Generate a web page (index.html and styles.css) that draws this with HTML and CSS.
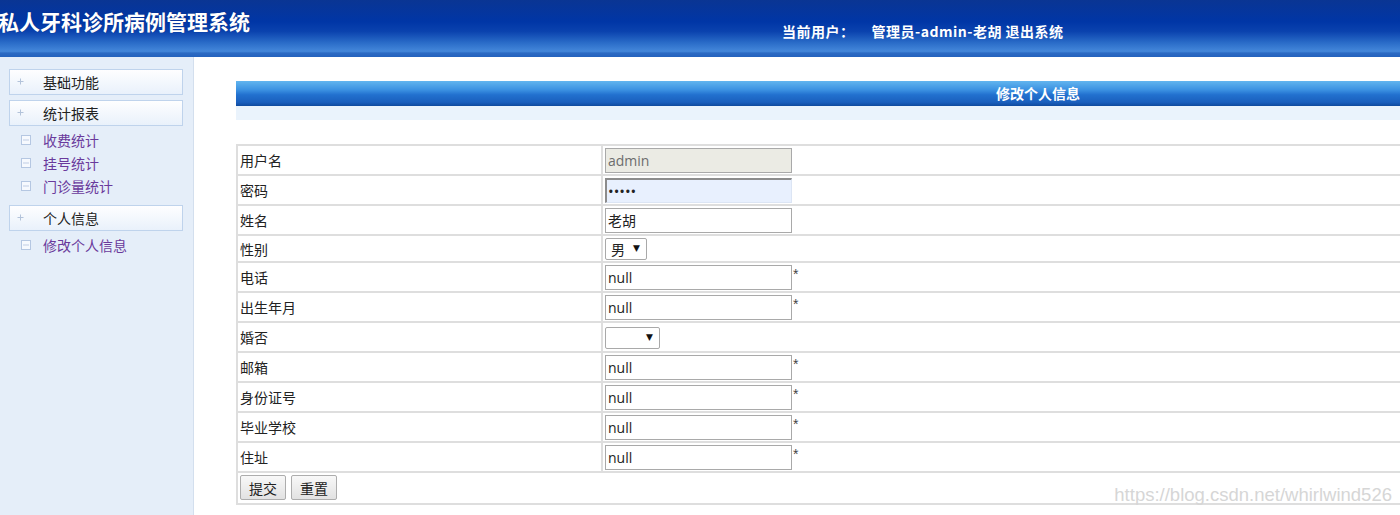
FILE: index.html
```html
<!DOCTYPE html>
<html lang="zh-CN">
<head>
    <meta charset="UTF-8">
    <meta name="viewport" content="width=device-width, initial-scale=1.0">
    <title>私人牙科诊所病例管理系统</title>
    <link rel="stylesheet" href="styles.css">
</head>
<body>

<div class="header">
    <div class="logo">私人牙科诊所病例管理系统</div>
    <div class="user-info"><span class="user-label">当前用户：</span>管理员-admin-老胡 <span class="logout">退出系统</span></div>
</div>

<div class="wrap">
    <div class="sidebar">
        <div class="menu-head">
            <svg class="plus" width="7" height="7" viewBox="0 0 7 7"><path d="M3.5 0.5v6M0.5 3.5h6" stroke="#b3c3da" stroke-width="1"/></svg>
            基础功能
        </div>
        <div class="menu-head">
            <svg class="plus" width="7" height="7" viewBox="0 0 7 7"><path d="M3.5 0.5v6M0.5 3.5h6" stroke="#b3c3da" stroke-width="1"/></svg>
            统计报表
        </div>
        <div class="menu-list">
            <div class="menu-item">
                <svg class="dot" width="10" height="10" viewBox="0 0 10 10"><rect x="0.5" y="0.5" width="9" height="9" fill="#f6f9fe" stroke="#b5c7e2"/><path d="M2.5 5h1M4.5 5h1M6.5 5h1" stroke="#8aa3cb"/></svg>
                收费统计
            </div>
            <div class="menu-item">
                <svg class="dot" width="10" height="10" viewBox="0 0 10 10"><rect x="0.5" y="0.5" width="9" height="9" fill="#f6f9fe" stroke="#b5c7e2"/><path d="M2.5 5h1M4.5 5h1M6.5 5h1" stroke="#8aa3cb"/></svg>
                挂号统计
            </div>
            <div class="menu-item">
                <svg class="dot" width="10" height="10" viewBox="0 0 10 10"><rect x="0.5" y="0.5" width="9" height="9" fill="#f6f9fe" stroke="#b5c7e2"/><path d="M2.5 5h1M4.5 5h1M6.5 5h1" stroke="#8aa3cb"/></svg>
                门诊量统计
            </div>
        </div>
        <div class="menu-head">
            <svg class="plus" width="7" height="7" viewBox="0 0 7 7"><path d="M3.5 0.5v6M0.5 3.5h6" stroke="#b3c3da" stroke-width="1"/></svg>
            个人信息
        </div>
        <div class="menu-list">
            <div class="menu-item">
                <svg class="dot" width="10" height="10" viewBox="0 0 10 10"><rect x="0.5" y="0.5" width="9" height="9" fill="#f6f9fe" stroke="#b5c7e2"/><path d="M2.5 5h1M4.5 5h1M6.5 5h1" stroke="#8aa3cb"/></svg>
                修改个人信息
            </div>
        </div>
    </div>

    <div class="content">
        <div class="title-bar">修改个人信息</div>
        <div class="title-strip"></div>

        <table class="form-table">
            <tr>
                <td class="label">用户名</td>
                <td><input type="text" class="field disabled" value="admin" disabled></td>
            </tr>
            <tr>
                <td class="label">密码</td>
                <td><input type="password" class="field autofill" value="12345"></td>
            </tr>
            <tr>
                <td class="label">姓名</td>
                <td><input type="text" class="field" value="老胡"></td>
            </tr>
            <tr class="row-select">
                <td class="label">性别</td>
                <td>
                    <span class="select-box small">
                        <select><option>男</option><option>女</option></select>
                        <span class="arrow">▼</span>
                    </span>
                </td>
            </tr>
            <tr>
                <td class="label">电话</td>
                <td><input type="text" class="field" value="null"><span class="req">*</span></td>
            </tr>
            <tr>
                <td class="label">出生年月</td>
                <td><input type="text" class="field" value="null"><span class="req">*</span></td>
            </tr>
            <tr>
                <td class="label">婚否</td>
                <td>
                    <span class="select-box wide">
                        <select><option></option><option>已婚</option><option>未婚</option></select>
                        <span class="arrow">▼</span>
                    </span>
                </td>
            </tr>
            <tr>
                <td class="label">邮箱</td>
                <td><input type="text" class="field" value="null"><span class="req">*</span></td>
            </tr>
            <tr>
                <td class="label">身份证号</td>
                <td><input type="text" class="field" value="null"><span class="req">*</span></td>
            </tr>
            <tr>
                <td class="label">毕业学校</td>
                <td><input type="text" class="field" value="null"><span class="req">*</span></td>
            </tr>
            <tr>
                <td class="label">住址</td>
                <td><input type="text" class="field" value="null"><span class="req">*</span></td>
            </tr>
            <tr class="row-buttons">
                <td colspan="2">
                    <div class="actions">
                        <button class="btn">提交</button>
                        <button class="btn">重置</button>
                    </div>
                </td>
            </tr>
        </table>
    </div>
</div>

<div class="watermark">https://blog.csdn.net/whirlwind526</div>

</body>
</html>
```

FILE: styles.css
```css
body {
    margin: 0;
    font-family: "Noto Sans CJK SC", sans-serif;
    font-size: 14px;
    color: #222;
    background-color: #fff;
    overflow: hidden;
    position: relative;
    height: 515px;
}
.header {
    height: 57px;
    display: flex;
    color: #fff;
    background: linear-gradient(to bottom, #0a3593 0%, #0036a6 38%, #0a42ae 55%, #2a6cc8 75%, #4487da 90%, #2c6bc4 93%, #2462bd 100%);
}
.logo {
    flex: 0 0 782px;
    font-size: 21px;
    font-weight: bold;
    line-height: 28px;
    padding-top: 7px;
    text-indent: -2px;
    text-shadow: 0 0 1px rgba(0, 0, 40, 0.4);
}
.user-info {
    padding-top: 22px;
    font-size: 14px;
    font-weight: bold;
    line-height: 18px;
    letter-spacing: 0.5px;
}
.user-label {
    margin-right: 17px;
}
.wrap {
    display: flex;
    height: 458px;
}
.sidebar {
    width: 184px;
    flex: 0 0 184px;
    background-color: #e5eef9;
    border-right: 1px solid #d3dfee;
    padding: 12px 0 0 9px;
}
.menu-head {
    box-sizing: border-box;
    width: 174px;
    height: 26px;
    display: flex;
    align-items: center;
    border: 1px solid #bfd3ec;
    background: linear-gradient(to bottom, #fefeff, #e9f1fb);
    margin-bottom: 5px;
    color: #222;
    line-height: 22px;
    padding-bottom: 1px;
}
.plus {
    margin-left: 7px;
    margin-right: 19px;
}
.menu-list {
    margin: -3px 0 8px;
}
.menu-item {
    height: 23px;
    display: flex;
    align-items: center;
    padding-left: 12px;
    color: #6a3a9c;
}
.dot {
    margin-right: 12px;
}
.content {
    flex: 1;
    padding: 24px 0 0 42px;
    overflow: hidden;
}
.title-bar {
    width: 1604px;
    height: 25px;
    line-height: 25px;
    text-align: center;
    color: #fff;
    font-size: 14px;
    font-weight: bold;
    background: linear-gradient(to bottom, #62b5ef 0%, #3c92e2 35%, #2271cf 55%, #1a5fbd 85%, #0f4a9e 100%);
}
.title-strip {
    width: 1604px;
    height: 14px;
    background-color: #eaf3fc;
}
.form-table {
    width: 1604px;
    margin-top: 24px;
    border-collapse: collapse;
}
.form-table td {
    border: 2px solid #dedede;
    padding: 1px 2px;
    height: 26px;
    vertical-align: middle;
}
.form-table .label {
    width: 359px;
    color: #222;
}
.row-select td {
    height: 23px;
}
.row-buttons td {
    height: 27px;
    padding: 1px 2px 2px;
}
.field {
    box-sizing: border-box;
    width: 187px;
    height: 25px;
    padding: 1px 2px;
    border: 1px solid #a9a9a9;
    font-family: "Open Sans", "Noto Sans CJK SC", sans-serif;
    font-size: 14px;
    color: #222;
    background-color: #fff;
    vertical-align: middle;
    outline: none;
}
.field.disabled {
    background-color: #ebebe4;
    color: #6d6d6d;
}
.field.autofill {
    background-color: #e8f0fe;
    border-top: 2px solid #8c8c8c;
    border-left: 2px solid #8c8c8c;
    border-right: 1px solid #dce5f4;
    border-bottom: 1px solid #dce5f4;
    padding-left: 1px;
    font-size: 15px;
}
.req {
    font-family: "Liberation Sans", sans-serif;
    font-size: 14px;
    color: #444;
    vertical-align: middle;
    position: relative;
    top: -3px;
    margin-left: 1px;
}
.select-box {
    position: relative;
    display: inline-block;
    vertical-align: middle;
}
.select-box select {
    -webkit-appearance: none;
    appearance: none;
    box-sizing: border-box;
    height: 22px;
    border: 1px solid #a9a9a9;
    border-radius: 2px;
    background-color: #fff;
    padding: 0 0 0 5px;
    font-family: "Noto Sans CJK SC", sans-serif;
    font-size: 14px;
    color: #222;
    outline: none;
    display: block;
}
.select-box.small select {
    width: 42px;
}
.select-box.wide select {
    width: 55px;
}
.arrow {
    position: absolute;
    right: 7px;
    top: 5px;
    font-family: "DejaVu Sans", sans-serif;
    font-size: 9px;
    line-height: 11px;
    color: #111;
    pointer-events: none;
}
.actions {
    display: flex;
    gap: 5px;
}
.btn {
    height: 25px;
    padding: 0 8px;
    font-family: "Noto Sans CJK SC", sans-serif;
    font-size: 14px;
    color: #222;
    border: 1px solid #adadad;
    border-radius: 2px;
    background: linear-gradient(to bottom, #f8f8f8, #e2e2e2);
}
.watermark {
    position: absolute;
    right: 8px;
    bottom: 9px;
    font-family: "Liberation Sans", sans-serif;
    font-size: 18.5px;
    color: #d6d6d6;
    pointer-events: none;
}
```
